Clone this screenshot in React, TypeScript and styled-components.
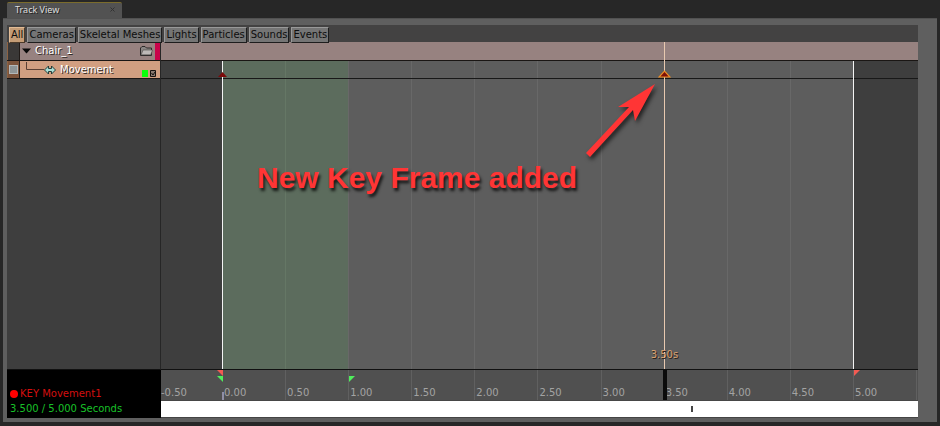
import React from "react";
import styled, { createGlobalStyle } from "styled-components";

const GlobalStyle = createGlobalStyle`
  * { box-sizing: border-box; }
  body {
    margin: 0;
    background: #272727;
    font-family: "DejaVu Sans", Verdana, sans-serif;
    font-size: 10px;
  }
  button { font: inherit; }
`;

const COLUMNS = "61px repeat(11, minmax(0, 1fr)) 2px";

const Page = styled.main`
  display: flex;
  flex-direction: column;
  min-height: 100vh;
  padding: 2px 3px 4px;
`;

const TabBar = styled.div`
  display: flex;
  padding-left: 4px;
`;

const Tab = styled.div`
  display: flex;
  align-items: center;
  justify-content: space-between;
  width: 115px;
  height: 16px;
  padding: 0 7px 2px 8px;
  border-top: 1px solid #7b6c2c;
  border-radius: 2px 2px 0 0;
  background: #525252;
  color: #dedede;
  font-family: "Noto Sans", sans-serif;
  font-size: 9px;
  text-shadow: 1px 1px 0 #222;
`;

const TabClose = styled.button`
  display: flex;
  padding: 0;
  border: 0;
  background: none;
  color: #333;
`;

const Panel = styled.section`
  display: flex;
  flex: 1;
  flex-direction: column;
  padding: 6px 19px 4px 4px;
  border-top: 1px solid #515151;
  background: #5f5f5f;
`;

const Filters = styled.nav`
  display: flex;
  gap: 2px;
  position: relative;
  z-index: 1;
  height: 17px;
  padding: 2px 2px 0;
  background: #434242;
`;

const FilterButton = styled.button<{ $active?: boolean }>`
  flex: none;
  height: 16px;
  padding: 0 1px;
  border: 1px solid;
  border-color: ${(p) => (p.$active ? "#e2bc96 #4b3a2a #4b3a2a #e2bc96" : "#999 #1d1d1d #1d1d1d #999")};
  background: ${(p) => (p.$active ? "#c49c76" : "#757575")};
  color: #0d0d0d;
  line-height: 14px;
`;

const Workspace = styled.div`
  display: grid;
  flex: 1;
  grid-template-columns: 154px minmax(0, 1fr);
  grid-template-rows: minmax(0, 1fr) 48px;
`;

const TrackList = styled.div`
  border-right: 1px solid #262626;
  border-bottom: 1px solid #111;
  background: #3e3e3e;
`;

const TrackRow = styled.div<{ $kind: "group" | "track" }>`
  display: flex;
  height: ${(p) => (p.$kind === "group" ? 19 : 18)}px;
  border-bottom: 1px solid #1a1614;
  background: ${(p) => (p.$kind === "group" ? "#978280" : "#d19f81")};
  color: #fff;
  text-shadow: 1px 1px 0 #302826;
`;

const Gutter = styled.div<{ $kind: "group" | "track" }>`
  display: flex;
  align-items: center;
  justify-content: center;
  width: 13px;
  border-right: 1px solid #211b18;
  border-left: 1px solid #8d6242;
  background: ${(p) => (p.$kind === "group" ? "#3a3837" : "#7c543c")};
`;

const EnableBox = styled.input`
  appearance: none;
  width: 9px;
  height: 9px;
  margin: 0;
  border: 1px solid #b4b8b9;
  background: #8e9597;
`;

const RowBody = styled.div<{ $kind: "group" | "track" }>`
  display: flex;
  flex: 1;
  align-items: center;
  gap: 4px;
  padding: ${(p) => (p.$kind === "group" ? "0 2px" : "0 4px 0 6px")};
`;

const RowName = styled.span`
  flex: 1;
  line-height: 16px;
`;

const ColorStripe = styled.div`
  width: 5px;
  background: #c9034a;
`;

const KeyTools = styled.div`
  display: flex;
  align-self: flex-end;
  gap: 1px;
  padding-bottom: 1px;
`;

const Plot = styled.div`
  display: grid;
  grid-template-columns: ${COLUMNS};
  grid-template-rows: 19px 18px minmax(0, 1fr);
  border-bottom: 1px solid #111;
  background: #3e3e3e;
`;

const GroupLane = styled.div`
  grid-area: 1 / 1 / 2 / -1;
  border-bottom: 1px solid #1a1614;
  background: #978280;
`;

const Column = styled.div<{ $line: number; $tone: "outside" | "loop" | "active" }>`
  grid-column: ${(p) => p.$line};
  grid-row: 2 / 4;
  border-left: 1px solid
    ${(p) => ({ outside: "#3e3e3e", loop: "#657765", active: "#686868" })[p.$tone]};
  background: ${(p) => ({ outside: "#3e3e3e", loop: "#5c6c5d", active: "#5d5d5d" })[p.$tone]};
`;

const Lane = styled.div`
  grid-area: 2 / 1 / 3 / -1;
  border-bottom: 1px solid #181818;
`;

const Boundary = styled.div<{ $line: number }>`
  grid-column: ${(p) => p.$line};
  grid-row: 2 / 4;
  border-left: 1px solid #f4f4f4;
`;

const Playhead = styled.div`
  position: relative;
  grid-column: 9;
  grid-row: 1 / 4;
  border-left: 1px solid #e8c9b0;
`;

const PlayheadTime = styled.output`
  position: absolute;
  bottom: 7px;
  left: -14px;
  color: #d9a070;
  line-height: 14px;
  text-shadow: 1px 1px 0 #2b2119;
`;

const KeySlot = styled.div<{ $line: number }>`
  position: relative;
  grid-column: ${(p) => p.$line};
  grid-row: 2;
`;

const KeyButton = styled.button`
  position: absolute;
  bottom: 1px;
  left: -6px;
  z-index: 1;
  display: flex;
  padding: 0;
  border: 0;
  background: none;
`;

const Note = styled.div`
  position: relative;
  grid-area: 3 / 2 / 4 / -1;
`;

const NoteText = styled.p`
  position: absolute;
  top: 82px;
  left: 35px;
  margin: 0;
  color: #ff3535;
  font-family: "Liberation Sans", Arial, sans-serif;
  font-size: 30px;
  font-weight: 700;
  line-height: 34px;
  white-space: nowrap;
  text-shadow: 2px 3px 3px rgba(0, 0, 0, 0.75);
`;

const NoteArrow = styled.svg`
  position: absolute;
  top: 0;
  left: 355px;
  filter: drop-shadow(2px 3px 2px rgba(0, 0, 0, 0.65));
`;

const Status = styled.div`
  padding: 16px 3px 0;
  background: #000;
  line-height: 15px;
`;

const StatusLine = styled.div<{ $color: string }>`
  display: flex;
  align-items: center;
  gap: 2px;
  color: ${(p) => p.$color};
`;

const Dot = styled.span`
  width: 8px;
  height: 8px;
  border-radius: 50%;
  background: #f00;
`;

const TimeArea = styled.div`
  display: flex;
  flex-direction: column;
  border-bottom: 1px solid #444;
`;

const Ruler = styled.div`
  display: grid;
  grid-template-columns: ${COLUMNS};
  height: 31px;
  border-bottom: 1px solid #464646;
  background: #505050;
`;

const Tick = styled.div<{ $line: number }>`
  position: relative;
  display: flex;
  align-items: flex-end;
  grid-column: ${(p) => p.$line};
  padding-left: ${(p) => (p.$line === 1 ? 0 : 1)}px;
  border-left: ${(p) => (p.$line === 1 ? 0 : 1)}px solid ${(p) => (p.$line === 2 ? "#505050" : "#606060")};
  color: #a3a3a3;
  line-height: 14px;
`;

const Flag = styled.svg<{ $top: number; $before?: boolean }>`
  position: absolute;
  top: ${(p) => p.$top}px;
  left: ${(p) => (p.$before ? -6 : 0)}px;
`;

const Cursor = styled.span`
  position: absolute;
  top: 0;
  bottom: 0;
  left: -2px;
  width: 4px;
  background: #0b0b0b;
`;

const OriginTick = styled.span`
  position: absolute;
  bottom: 0;
  left: -1px;
  width: 2px;
  height: 8px;
  background: #8f8fa6;
`;

const Scroller = styled.div`
  display: flex;
  flex: 1;
  align-items: center;
  padding-left: 70%;
  background: #fff;
`;

const ScrollMark = styled.span`
  width: 2px;
  height: 6px;
  background: #444;
`;

const filters = ["All", "Cameras", "Skeletal Meshes", "Lights", "Particles", "Sounds", "Events"];
const times = ["-0.50", "0.00", "0.50", "1.00", "1.50", "2.00", "2.50", "3.00", "3.50", "4.00", "4.50", "5.00", ""];

const toneFor = (line: number) => {
  if (line < 2 || line > 11) return "outside";
  return line < 4 ? "loop" : "active";
};

function TimeFlag({ top, color, before }: { top: number; color: string; before?: boolean }) {
  return (
    <Flag $top={top} $before={before} width="6" height="6" viewBox="0 0 6 6" aria-hidden="true">
      <path d={before ? "M0 0H6V6Z" : "M0 0H6L0 6Z"} fill={color} />
    </Flag>
  );
}

function KeyFrame({ selected }: { selected?: boolean }) {
  return (
    <KeyButton aria-label={selected ? "Key at 3.50" : "Key at 0.00"}>
      <svg width="13" height="8" viewBox="0 0 13 8">
        {selected ? (
          <path d="M6.5 1.2L12 7H1Z" fill="#7d0f08" stroke="#ee8c22" strokeWidth="1.2" />
        ) : (
          <path d="M6.5 2L11 7H2Z" fill="#7b0a0a" />
        )}
      </svg>
    </KeyButton>
  );
}

export default function App() {
  return (
    <>
      <GlobalStyle />
      <Page>
        <TabBar>
          <Tab>
            Track View
            <TabClose aria-label="Close">
              <svg width="5" height="5" viewBox="0 0 5 5">
                <path d="M0.5 0.5L4.5 4.5M4.5 0.5L0.5 4.5" stroke="currentColor" />
              </svg>
            </TabClose>
          </Tab>
        </TabBar>
        <Panel>
          <Filters>
            {filters.map((name, i) => (
              <FilterButton key={name} $active={i === 0}>
                {name}
              </FilterButton>
            ))}
          </Filters>
          <Workspace>
            <TrackList>
              <TrackRow $kind="group">
                <Gutter $kind="group" />
                <RowBody $kind="group">
                  <svg width="9" height="6" viewBox="0 0 9 6">
                    <path d="M0 0.5H9L4.5 5.5Z" fill="#080808" />
                  </svg>
                  <RowName>Chair_1</RowName>
                  <svg width="13" height="10" viewBox="0 0 13 10">
                    <path d="M0.5 9.5V2L2 0.5H5L6.5 2H11.5V9.5Z" fill="#8a8684" stroke="#2c2928" />
                    <path d="M1.2 8.8L3 4H12.5L10.8 8.8Z" fill="#bdb9b7" stroke="#4a4645" strokeWidth="0.6" />
                  </svg>
                </RowBody>
                <ColorStripe />
              </TrackRow>
              <TrackRow $kind="track">
                <Gutter $kind="track">
                  <EnableBox type="checkbox" defaultChecked aria-label="Enable Movement" />
                </Gutter>
                <RowBody $kind="track">
                  <svg width="30" height="17" viewBox="0 0 30 17">
                    <path d="M0.5 1V8.5H18" fill="none" stroke="#5a4034" />
                    <path
                      d="M18.5 9L22.5 5V7.5H25.5V5L29.5 9L25.5 13V10.5H22.5V13Z"
                      fill="#a9dfd6"
                      stroke="#14302c"
                      strokeWidth="0.9"
                    />
                  </svg>
                  <RowName>Movement</RowName>
                  <KeyTools>
                    <svg width="14" height="7" viewBox="0 0 14 7">
                      <path d="M0 0H6V7H0Z" fill="#0bff0b" />
                      <path d="M8.5 0.5H13.5V6.5H8.5Z" fill="#8a7a70" stroke="#17120f" />
                      <path d="M9.5 3L11 5L13 2" fill="none" stroke="#17120f" />
                    </svg>
                  </KeyTools>
                </RowBody>
              </TrackRow>
            </TrackList>
            <Plot>
              <GroupLane />
              {times.map((_, i) => (
                <Column key={i} $line={i + 1} $tone={toneFor(i + 1)} />
              ))}
              <Lane />
              <Boundary $line={2} />
              <Boundary $line={12} />
              <KeySlot $line={2}>
                <KeyFrame />
              </KeySlot>
              <KeySlot $line={9}>
                <KeyFrame selected />
              </KeySlot>
              <Playhead>
                <PlayheadTime>3.50s</PlayheadTime>
              </Playhead>
              <Note>
                <NoteText>New Key Frame added</NoteText>
                <NoteArrow width="90" height="90" viewBox="577 79 90 90" aria-hidden="true">
                  <path d="M655 84L635 121L633 110L590 157L586 153L629 107L618 107Z" fill="#ff3535" />
                </NoteArrow>
              </Note>
            </Plot>
            <Status>
              <StatusLine $color="#d40f0f">
                <Dot />
                KEY Movement1
              </StatusLine>
              <StatusLine $color="#18c028">3.500 / 5.000 Seconds</StatusLine>
            </Status>
            <TimeArea>
              <Ruler>
                {times.map((time, i) => (
                  <Tick key={i} $line={i + 1}>
                    {i === 1 && (
                      <>
                        <TimeFlag top={0} color="#f25a52" before />
                        <TimeFlag top={6} color="#4fee5c" before />
                        <OriginTick />
                      </>
                    )}
                    {i === 3 && <TimeFlag top={6} color="#4fee5c" />}
                    {i === 11 && <TimeFlag top={0} color="#f25a52" />}
                    {i === 8 && <Cursor />}
                    {time}
                  </Tick>
                ))}
              </Ruler>
              <Scroller>
                <ScrollMark />
              </Scroller>
            </TimeArea>
          </Workspace>
        </Panel>
      </Page>
    </>
  );
}
